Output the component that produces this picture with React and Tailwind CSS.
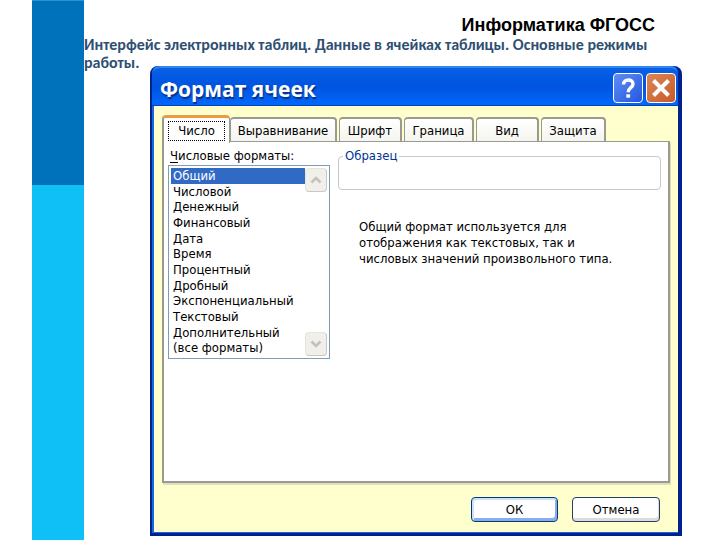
import { useState } from "react";

const TABS = [
  { name: "Число", width: "w-[68px]" },
  { name: "Выравнивание", width: "w-[107px]" },
  { name: "Шрифт", width: "w-[63px]" },
  { name: "Граница", width: "w-[70px]" },
  { name: "Вид", width: "w-[63px]" },
  { name: "Защита", width: "w-[65px]" },
];

const FORMATS = [
  "Общий",
  "Числовой",
  "Денежный",
  "Финансовый",
  "Дата",
  "Время",
  "Процентный",
  "Дробный",
  "Экспоненциальный",
  "Текстовый",
  "Дополнительный",
  "(все форматы)",
];

function ScrollButton({ label, d }) {
  return (
    <button
      aria-label={label}
      className="flex h-6 w-[22px] items-center justify-center rounded-sm border border-[#e4e3dc] border-r-[#c9c8c1] border-b-[#c9c8c1] bg-[#f0efe9]"
    >
      <svg viewBox="0 0 12 8" className="h-2 w-3" fill="none" stroke="#c2c1bc" strokeWidth="2.6" aria-hidden="true">
        <path d={d} />
      </svg>
    </button>
  );
}

function TitleBar() {
  return (
    <header className="flex h-10 items-center justify-between rounded-t-lg border-t-2 border-b border-t-[#2f86f0] border-b-[#0043b8] bg-linear-to-b from-[#0a5fe6] via-[#0054e0] to-[#0268fc] pr-0.5 pl-1">
      <h2
        id="dialog-title"
        className="pt-1 pl-1 font-['Open_Sans','Noto_Sans',sans-serif] text-[21px] leading-8 font-bold text-white [text-shadow:1px_2px_1px_#0a2f86]"
      >
        Формат ячеек
      </h2>
      <div className="flex gap-[3px] pt-0.5">
        <button aria-label="Справка" className="size-[30px] rounded-[4px] border border-white bg-linear-to-br from-[#5f8df5] to-[#2456dd]">
          <svg viewBox="0 0 28 28" className="size-7" fill="none" stroke="#fff" strokeWidth="3.4" aria-hidden="true">
            <path d="M9.500 10.500C9.500 4.500 19 4.500 19 10C19 14 14.200 13.400 14.200 18.200" />
            <path d="M12.300 22h3.800" />
          </svg>
        </button>
        <button aria-label="Закрыть" className="size-[30px] rounded-[4px] border border-white bg-linear-to-br from-[#dc8658] to-[#c75a26]">
          <svg viewBox="0 0 28 28" className="size-7" fill="none" stroke="#fff" strokeWidth="4" aria-hidden="true">
            <path d="M6.500 6.500l15 15M21.500 6.500l-15 15" />
          </svg>
        </button>
      </div>
    </header>
  );
}

function FormatDialog() {
  const [tab, setTab] = useState("Число");
  const [format, setFormat] = useState("Общий");

  return (
    <section
      role="dialog"
      aria-labelledby="dialog-title"
      className="mr-[38px] ml-[66px] flex flex-1 flex-col rounded-t-lg border-r-4 border-b-[3px] border-l-2 border-[#00228c] bg-[#0054e0] font-['DejaVu_Sans_Condensed','DejaVu_Sans',sans-serif] text-[13px] leading-4 text-black"
    >
      <TitleBar />
      <div className="flex flex-1 flex-col border-b border-l-2 border-[#1a66e0] bg-[#ffffce] px-2 pt-2.5 pb-2.5">
        <div role="tablist" className="flex h-[25px] items-end gap-0.5">
          {TABS.map(({ name, width }) => (
            <button
              key={name}
              role="tab"
              aria-selected={tab === name}
              onClick={() => setTab(name)}
              className={`${width} rounded-t-[4px] whitespace-nowrap ${
                tab === name
                  ? "z-10 -mr-0.5 -mb-0.5 h-7 border-t-[3px] border-r border-l-2 border-t-[#ee9a45] border-r-[#9a9a90] border-l-[#9a9a90] bg-white p-0.5"
                  : "h-6 border-t-2 border-r-2 border-l border-[#9a9a90] bg-linear-to-b from-white to-[#f4f4f0] pt-0.5"
              }`}
            >
              <span className={tab === name ? "mx-0.5 block h-5 border border-dotted border-black leading-[18px]" : ""}>
                {name}
              </span>
            </button>
          ))}
        </div>

        <div
          role="tabpanel"
          className="flex flex-1 gap-2 border border-r-2 border-b-2 border-l-2 border-[#9a9a90] bg-white pt-1.5 pr-[7px] pl-1 shadow-[1px_2px_0_#dedec0]"
        >
          <div className="w-[162px] shrink-0">
            <div id="formats-label" className="pl-0.5 leading-4">
              <span className="underline underline-offset-2">Ч</span>исловые форматы:
            </div>
            <div className="mt-px flex border border-[#7f9db9] p-0.5">
              <ul role="listbox" aria-labelledby="formats-label" className="grid h-[188px] flex-1 grid-rows-12">
                {FORMATS.map((name) => (
                  <li
                    key={name}
                    role="option"
                    aria-selected={format === name}
                    onClick={() => setFormat(name)}
                    className={`pl-0.5 whitespace-nowrap ${format === name ? "bg-[#316ac5] text-white" : ""}`}
                  >
                    {name}
                  </li>
                ))}
              </ul>
              <div className="flex flex-col justify-between">
                <ScrollButton label="Вверх" d="M1.500 6.500L6 2l4.500 4.500" />
                <ScrollButton label="Вниз" d="M1.500 1.500L6 6l4.500-4.500" />
              </div>
            </div>
          </div>

          <div className="flex-1">
            <fieldset className="h-[42px] rounded-[4px] border border-[#c8c8c8] pl-1">
              <legend className="px-0.5 text-[#003399]">Образец</legend>
            </fieldset>
            <p className="mt-[29px] ml-[21px] max-w-64">
              Общий формат используется для
              <br />
              отображения как текстовых, так и
              <br />
              числовых значений произвольного типа.
            </p>
          </div>
        </div>

        <div className="mt-3.5 flex justify-end gap-3.5 pr-2.5">
          <button className="h-[25px] w-[87px] rounded-[4px] border border-[#003c74] bg-white shadow-[inset_2px_2px_0_#cee0fb,inset_-2px_-3px_0_#89adea]">
            ОК
          </button>
          <button className="h-[25px] w-[88px] rounded-[4px] border border-[#23405c] bg-white shadow-[inset_-1px_-3px_0_#dcdcdc]">
            Отмена
          </button>
        </div>
      </div>
    </section>
  );
}

export default function App() {
  return (
    <div className="flex min-h-screen bg-white">
      <aside className="ml-8 flex w-[52px] shrink-0 flex-col bg-[#0fc0f7]">
        <div className="h-[185px] border-t border-[#2f93cf] bg-[#0072bc]" />
      </aside>
      <main className="flex flex-1 flex-col pt-3.5 pb-1">
        <div className="pr-[65px] text-right font-['Liberation_Sans',Arial,sans-serif] text-[18px] leading-[22px] font-bold text-black">
          Информатика ФГОСС
        </div>
        <h1 className="h-[30px] pr-14 font-[Carlito,Lato,sans-serif] text-[16px] leading-[18px] font-bold text-[#2f4f73]">
          Интерфейс электронных таблиц. Данные в ячейках таблицы. Основные режимы работы.
        </h1>
        <FormatDialog />
      </main>
    </div>
  );
}
